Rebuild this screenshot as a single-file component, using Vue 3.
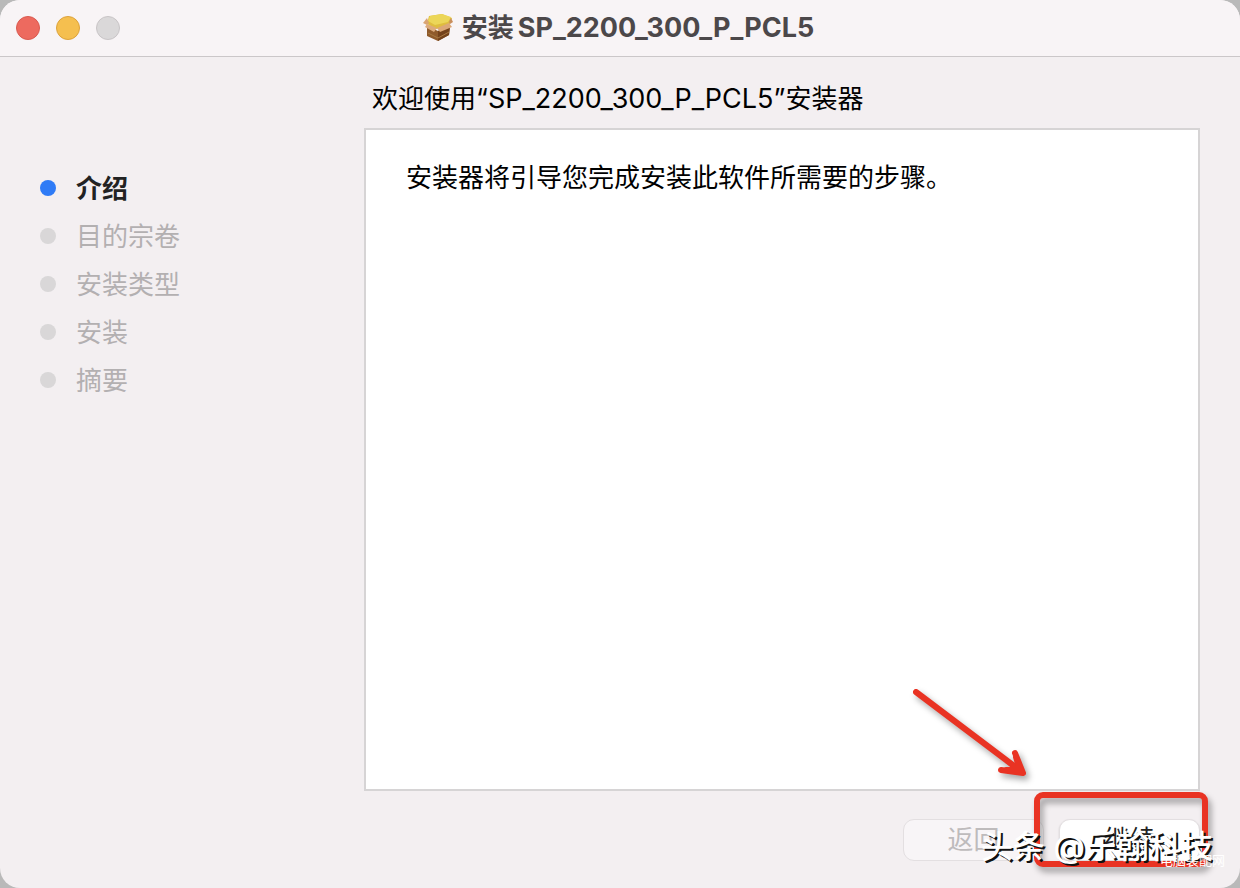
<script setup>
import { ref } from 'vue'

const packageName = 'SP_2200_300_P_PCL5'
const steps = ['介绍', '目的宗卷', '安装类型', '安装', '摘要']
const current = ref(0)
</script>

<template>
  <div class="window">
    <header class="titlebar">
      <div class="lights">
        <button class="light close" type="button" aria-label="关闭"></button>
        <button class="light minimize" type="button" aria-label="最小化"></button>
        <button class="light zoom" type="button" aria-label="缩放" disabled></button>
      </div>
      <h1 class="title">
        <svg class="box" viewBox="0 0 32 32" aria-hidden="true">
          <path d="M5 14 L16 19 L28 14 L27 23 L16 29 L5 24 Z" fill="#8f5a2b" />
          <path d="M16 19 L28 14 L27 23 L16 29 Z" fill="#74421b" />
          <path d="M6 21 L16 26 L27 20" fill="none" stroke="#a87840" stroke-width="1" />
          <path d="M7 4 L20 2 L30 6 L27 14 L14 17 L5 12 Z" fill="#dfbd3e" />
          <path d="M8 4 L20 2 L29 5 L26 10 L13 13 L6 9 Z" fill="#ecd658" />
          <path d="M5 6 L1 11 L5 13 L7 11 Z" fill="#d9a473" />
          <path d="M5 12 L15 16 L12 20 L3 15 Z" fill="#dcaa7c" />
          <path d="M15 16 L27 11 L30 15 L18 20 Z" fill="#dca877" />
          <path d="M29 6 L31 10 L28 12 L27 10 Z" fill="#c98e5c" />
        </svg>
        <span>安装</span><span class="name">{{ packageName }}</span>
      </h1>
    </header>

    <div class="body">
      <nav class="sidebar" aria-label="安装步骤">
        <ol class="steps">
          <li v-for="(step, i) in steps" :key="step" class="step" :class="{ active: i === current }">
            <span class="dot"></span><span class="label">{{ step }}</span>
          </li>
        </ol>
      </nav>

      <main class="main">
        <h2 class="heading">欢迎使用<span class="package">“{{ packageName }}”</span>安装器</h2>
        <section class="panel">
          <p class="message">安装器将引导您完成安装此软件所需要的步骤。</p>
          <svg class="arrow" viewBox="0 0 130 100" aria-hidden="true">
            <path d="M10 12 L112 89" />
            <path d="M109 73 L117 93 L95 90 M110 77 L114 90 L100 90" />
          </svg>
        </section>
        <footer class="actions">
          <button class="action" type="button" disabled>返回</button>
          <div class="target">
            <button class="action" type="button">继续</button>
            <span class="highlight"></span>
          </div>
        </footer>
      </main>
    </div>

    <span class="watermark">头条 @乐翰科技</span>
    <span class="site">电脑装配网</span>
  </div>
</template>

<style>
body {
  background: #b9b9b9;
}
</style>

<style scoped>
.window {
  position: relative;
  display: flex;
  flex-direction: column;
  box-sizing: border-box;
  min-height: 100vh;
  overflow: hidden;
  border-radius: 20px;
  background: #f3eff1;
  color: #000;
  font-family: Inter, "Noto Sans CJK SC", sans-serif;
  font-size: 26px;
  line-height: 36px;
}

.titlebar {
  display: grid;
  grid-template-columns: 1fr auto 1fr;
  align-items: center;
  box-sizing: border-box;
  height: 57px;
  padding: 0 20px 0 16px;
  border-bottom: 1px solid #cbc7c9;
  background: #f8f4f6;
}

.lights {
  display: flex;
  gap: 16px;
}

.light {
  width: 24px;
  height: 24px;
  padding: 0;
  border: 1px solid #d95a50;
  border-radius: 50%;
  background: #ed6a5f;
}

.light.minimize {
  border-color: #dca23c;
  background: #f5bf4f;
}

.light.zoom {
  border-color: #c8c4c6;
  background: #dad8d9;
}

.title {
  display: flex;
  align-items: center;
  margin: 0;
  color: #4c484a;
  font-size: 26px;
  font-weight: 700;
}

.box {
  width: 32px;
  height: 32px;
  margin-right: 8px;
}

.name {
  margin-left: 4px;
  font-size: 27px;
}

.package {
  font-size: 27px;
}

.body {
  display: flex;
  flex: 1;
  padding: 0 40px 27px;
}

.sidebar {
  flex: 0 0 324px;
}

.steps {
  margin: 0;
  padding: 107px 0 0;
  list-style: none;
}

.step {
  display: flex;
  align-items: center;
  gap: 20px;
  height: 48px;
  color: #b3b0b1;
}

.step.active {
  color: #222;
  font-weight: 700;
}

.label {
  padding-top: 2px;
}

.dot {
  width: 16px;
  height: 16px;
  border-radius: 50%;
  background: #d9d7d8;
}

.active .dot {
  background: #2f7bf6;
}

.main {
  display: flex;
  flex: 1;
  flex-direction: column;
  min-width: 0;
}

.heading {
  margin: 0;
  padding: 24px 8px 11px;
  font-size: 26px;
  font-weight: 400;
}

.panel {
  position: relative;
  flex: 1;
  padding: 30px 40px;
  border: 2px solid #d6d4d5;
  background: #fff;
}

.message {
  margin: 0;
}

.arrow {
  position: absolute;
  right: 162px;
  bottom: 9px;
  width: 130px;
  height: 100px;
  overflow: visible;
  fill: none;
  stroke: #e93323;
  stroke-width: 6;
  stroke-linecap: round;
  stroke-linejoin: round;
  filter: drop-shadow(3px 4px 3px rgba(0, 0, 0, 0.35));
}

.actions {
  display: flex;
  justify-content: flex-end;
  gap: 15px;
  padding-top: 28px;
}

.target {
  position: relative;
}

.action {
  width: 141px;
  height: 42px;
  padding: 0;
  border: 1px solid #e3dfe1;
  border-radius: 11px;
  background: #fff;
  box-shadow: 0 1px 2px rgba(0, 0, 0, 0.14);
  color: #222;
  font: inherit;
}

.action:disabled {
  background: #f8f5f7;
  box-shadow: none;
  color: #bebbbc;
}

.highlight {
  position: absolute;
  inset: -27px -8px -6px -25px;
  border: 6px solid #e93323;
  border-radius: 9px;
  filter: drop-shadow(3px 5px 3px rgba(0, 0, 0, 0.35));
  pointer-events: none;
}

.watermark {
  position: absolute;
  right: 27px;
  bottom: 21px;
  color: #fff;
  font-size: 32px;
  font-weight: 500;
  line-height: 40px;
  text-shadow: 2px 2px 0 #111;
  white-space: nowrap;
}

.site {
  position: absolute;
  right: 15px;
  bottom: 18px;
  color: #fff;
  font-size: 13px;
  line-height: 20px;
}
</style>
